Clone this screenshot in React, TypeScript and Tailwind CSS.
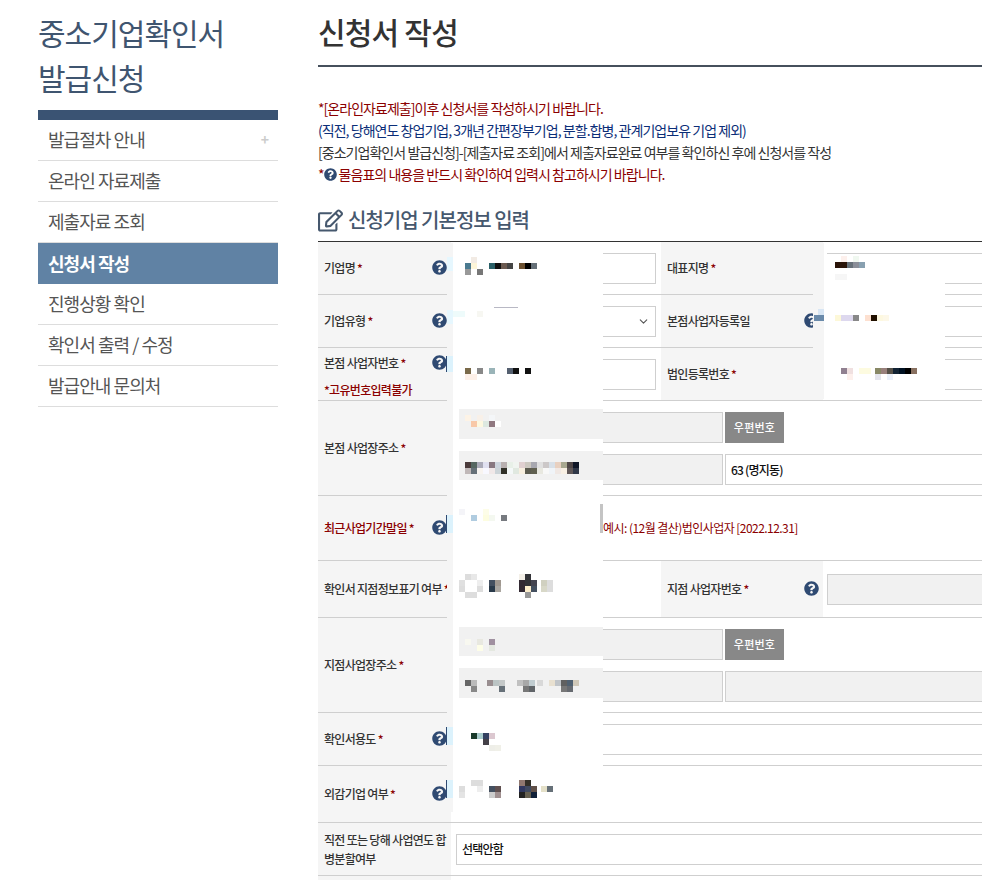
import { FaQuestionCircle, FaRegEdit } from "react-icons/fa";
import { ChevronDown } from "lucide-react";
import type { ReactNode } from "react";

const menu = ["발급절차 안내", "온라인 자료제출", "제출자료 조회", "신청서 작성", "진행상황 확인", "확인서 출력 / 수정", "발급안내 문의처"];

type Px = [number, string];
const pixels: [number, Px[]][] = [
  [257, [[471, "#f2ebe4"]]],
  [263, [[465, "#4a7a90"], [471, "#fdf5d8"], [489, "#2a6068"], [495, "#111111"], [501, "#6b5a50"], [507, "#444444"], [519, "#6b5030"], [525, "#000000"], [531, "#667078"]]],
  [269, [[465, "#999999"], [477, "#777777"]]],
  [311, [[453, "#eefbfb"], [459, "#eefbfb"], [477, "#f7f7f2"]]],
  [368, [[465, "#7a6a4a"], [477, "#888888"], [489, "#9ab4b8"], [507, "#556070"], [513, "#111111"], [525, "#111111"]]],
  [374, [[465, "#fdf0e8"], [471, "#fdf0e8"]]],
  [415, [[465, "#fdf3e6"], [477, "#f8f0e8"], [489, "#f4f6f8"]]],
  [421, [[471, "#f8c8a8"], [477, "#fdf8e0"], [483, "#dde8e0"], [489, "#907880"], [495, "#ffffff"]]],
  [462, [[465, "#4a3a3a"], [471, "#556660"], [477, "#aaaab8"], [483, "#e0e0f0"], [489, "#887880"], [495, "#ccd4dc"], [501, "#b8b0b0"], [507, "#e8f0e8"], [513, "#f0f4f0"], [519, "#e0d0d0"], [525, "#ccc8c0"], [531, "#a8a8b0"], [537, "#e0e0e0"], [543, "#ccc8c8"], [549, "#d8e0e8"], [555, "#e8d0c0"], [561, "#a8a890"], [567, "#504848"], [573, "#101828"]]],
  [468, [[465, "#c0b8b8"], [471, "#667078"], [477, "#f8f4f0"], [483, "#f8f8ff"], [489, "#f0e8e8"], [495, "#ccd4d8"], [501, "#303028"], [507, "#f4f8f8"], [513, "#e0e8e0"], [519, "#f8f0e0"], [525, "#5c5c50"], [531, "#606050"], [537, "#e8e8e0"], [543, "#f8f8f8"], [549, "#f0f4f8"], [555, "#f0e8e4"], [561, "#f8f0e4"], [567, "#605858"], [573, "#303848"]]],
  [515, [[471, "#b0cce0"], [483, "#fdfde0"], [489, "#f4f8f0"], [501, "#777a80"]]],
  [509, [[459, "#f4f4f8"], [483, "#fdfde8"]]],
  [574, [[465, "#dddddd"], [471, "#e8e8e8"], [519, "#f4f0e8"], [525, "#333338"]]],
  [580, [[459, "#e0e0e0"], [477, "#eeeeee"], [489, "#445060"], [495, "#a09890"], [519, "#332a33"], [525, "#333338"], [531, "#444450"], [541, "#d0d0c0"], [547, "#dddddd"]]],
  [586, [[459, "#dddddd"], [477, "#dddddd"], [489, "#2a3a4a"], [495, "#aaa6a0"], [519, "#332a33"], [525, "#fdeecc"], [531, "#445060"], [541, "#d8d8c8"], [547, "#dddddd"]]],
  [592, [[465, "#dddddd"], [471, "#dddddd"], [525, "#999999"]]],
  [639, [[465, "#f8f8f0"], [477, "#e8e8e0"], [489, "#a090a0"]]],
  [645, [[477, "#fdfde8"], [489, "#e4e8e0"]]],
  [680, [[465, "#666666"], [471, "#bbbbbb"], [487, "#998e90"], [493, "#bbc4c4"], [499, "#c4c8c8"], [517, "#c0c0c0"], [523, "#a8a8a8"], [529, "#c0ccd0"], [537, "#d8d8d8"], [549, "#e8e0d0"], [555, "#c0c4c8"], [561, "#606060"], [567, "#506070"], [573, "#d0c8b8"]]],
  [686, [[471, "#888888"], [499, "#667078"], [523, "#777777"], [529, "#606468"], [561, "#777777"], [567, "#666a70"]]],
  [733, [[471, "#1a3a2a"], [477, "#aacccc"], [483, "#334060"], [489, "#dcc8d0"]]],
  [739, [[483, "#444048"]]],
  [745, [[489, "#eeeee8"], [495, "#f0f0e8"]]],
  [780, [[471, "#dddddd"], [477, "#dddddd"], [519, "#907870"], [525, "#333028"]]],
  [786, [[459, "#dddddd"], [477, "#eeeeee"], [489, "#445060"], [495, "#605050"], [519, "#303860"], [525, "#404a60"], [531, "#605048"], [541, "#e4e0c8"], [547, "#667078"]]],
  [792, [[459, "#e4e4e4"], [489, "#cccccc"], [495, "#a09090"], [519, "#222222"], [525, "#666050"], [531, "#102038"]]],
  [262, [[835, "#2a1408"], [841, "#2a1408"], [847, "#667078"], [853, "#8a8e98"], [859, "#88a0b0"]]],
  [256, [[841, "#fdf0ec"], [853, "#f0f8f0"]]],
  [274, [[835, "#f6f6f6"], [841, "#f6f6f6"]]],
  [315, [[835, "#fdf8d8"], [841, "#ddd8ee"], [847, "#ddd8ee"], [853, "#888888"], [865, "#fde0d0"], [871, "#201000"], [877, "#fdf8e0"], [883, "#fdf8e8"]]],
  [368, [[841, "#908090"], [847, "#f0e0e0"], [859, "#fdfbe0"], [865, "#fdfbe0"], [875, "#888866"], [881, "#98807c"], [887, "#555048"], [893, "#112233"], [899, "#001122"], [905, "#000000"], [911, "#887060"]]],
  [374, [[847, "#fdf0ec"], [875, "#e4e4ec"], [887, "#eaf0fa"]]],
];

function Help({ className = "" }: { className?: string }) {
  return <FaQuestionCircle className={`shrink-0 text-[15px] text-[#2f4a72] ${className}`} />;
}

function Star() {
  return <span className="text-[#8b0000]"> *</span>;
}

function Th({ children, width, help, top }: { children: ReactNode; width: string; help?: boolean; top?: boolean }) {
  return (
    <div className={`${width} flex h-full shrink-0 justify-between bg-[#f5f5f5] pl-[6px] pr-[4px] ${top ? "items-start pt-[1px]" : "items-center pb-[2px]"}`}>
      <div className="min-w-0 text-[12px] font-medium leading-[27px] tracking-[-0.7px] whitespace-nowrap text-[#333]">{children}</div>
      {help && <Help className={top ? "mt-[6px]" : ""} />}
    </div>
  );
}

function Row({ h, children }: { h: string; children: ReactNode }) {
  return <div className={`${h} flex border-b border-[#cfcfcf]`}>{children}</div>;
}

function Field({ width, gray, children }: { width: string; gray?: boolean; children?: ReactNode }) {
  return (
    <div className={`${width} relative flex h-[31px] shrink-0 items-center border border-[#cfcfcf] px-[5px] text-[12px] font-medium tracking-[-0.8px] text-[#111] ${gray ? "bg-[#f1f1f1]" : "bg-white"}`}>
      {children}
    </div>
  );
}

function Zip() {
  return (
    <button className="ml-[2px] h-[31px] w-[59px] shrink-0 bg-[#888] text-[11px] font-medium tracking-[0.2px] text-white">우편번호</button>
  );
}

export default function App() {
  return (
    <div className="relative h-[880px] w-[982px] overflow-hidden bg-white font-['Noto_Sans_CJK_KR','Noto_Sans',sans-serif]">
      <div className="flex">
        <aside className="ml-[38px] w-[240px] shrink-0">
          <h2 className="pt-[10px] text-[30px] leading-[45px] tracking-[-1px] text-[#3f5570]">
            중소기업확인서
            <br />
            발급신청
          </h2>
          <div className="mt-[10px] h-[10px] bg-[#3a5373]" />
          <ul>
            {menu.map((m, i) => (
              <li
                key={m}
                className={`flex h-[41px] items-center justify-between px-[10px] pb-[1px] text-[18px] tracking-[-0.95px] ${
                  i === 3 ? "bg-[#6082a4] font-bold text-white" : "border-b border-[#dddddd] text-[#555]"
                }`}
              >
                {m}
                {i === 0 && <span className="text-[14px] font-bold text-[#cccccc]">+</span>}
              </li>
            ))}
          </ul>
        </aside>

        <main className="ml-[40px] w-[664px] shrink-0 overflow-hidden">
          <h1 className="h-[67px] border-b-2 border-[#46505c] pt-[8px] text-[30px] leading-[46px] font-medium tracking-[-0.8px] text-[#333]">신청서 작성</h1>
          <div className="mt-[30px] text-[14px] leading-[22px] tracking-[-0.96px]">
            <p className="text-[#8b0000]">*[온라인자료제출]이후 신청서를 작성하시기 바랍니다.</p>
            <p className="text-[#0b2e78]">(직전, 당해연도 창업기업, 3개년 간편장부기업, 분할.합병, 관계기업보유 기업 제외)</p>
            <p className="text-[#333]">[중소기업확인서 발급신청]-[제출자료 조회]에서 제출자료완료 여부를 확인하신 후에 신청서를 작성</p>
            <p className="flex items-center text-[#8b0000]">
              *<Help className="mr-[2px] !text-[13px]" />물음표의 내용을 반드시 확인하여 입력시 참고하시기 바랍니다.
            </p>
          </div>
          <div className="mt-[20px] flex h-[30px] items-center gap-[5px] text-[#46586e]">
            <FaRegEdit className="text-[25px]" />
            <span className="text-[20px] font-medium tracking-[-1px]">신청기업 기본정보 입력</span>
          </div>

          <div className="mt-[6px] border-t border-[#333]">
            <Row h="h-[53px]">
              <Th width="w-[133px]" help>기업명<Star /></Th>
              <div className="flex w-[210px] shrink-0 items-center pl-[8px]"><Field width="w-[197px]" /></div>
              <Th width="w-[162px]">대표지명<Star /></Th>
              <div className="flex min-w-0 flex-1 items-center pl-[4px]"><Field width="w-[200px]" /></div>
            </Row>
            <Row h="h-[53px]">
              <Th width="w-[133px]" help>기업유형<Star /></Th>
              <div className="flex w-[210px] shrink-0 items-center pl-[8px]">
                <Field width="w-[197px] justify-end"><ChevronDown className="size-[13px] text-[#555]" /></Field>
              </div>
              <Th width="w-[162px]" help>본점사업자등록일</Th>
              <div className="flex min-w-0 flex-1 items-center pl-[4px]"><Field width="w-[200px]" /></div>
            </Row>
            <Row h="h-[53px]">
              <Th width="w-[133px]" help top>
                본점 사업자번호<Star />
                <br />
                <span className="text-[#8b0000]">*고유번호입력불가</span>
              </Th>
              <div className="flex w-[210px] shrink-0 items-center pl-[8px]"><Field width="w-[197px]" /></div>
              <Th width="w-[162px]">법인등록번호<Star /></Th>
              <div className="flex min-w-0 flex-1 items-center pl-[4px]"><Field width="w-[200px]" /></div>
            </Row>
            <Row h="h-[95px]">
              <Th width="w-[133px]">본점 사업장주소<Star /></Th>
              <div className="flex flex-1 flex-col gap-[11px] pt-[11px] pl-[8px]">
                <div className="flex"><Field width="w-[264px]" gray /><Zip /></div>
                <div className="flex"><Field width="w-[264px]" gray /><Field width="w-[300px] ml-[2px]">63 (명지동)</Field></div>
              </div>
            </Row>
            <Row h="h-[65px]">
              <Th width="w-[133px]" help><span className="text-[#8b0000]">최근사업기간말일<Star /></span></Th>
              <div className="flex flex-1 items-center pl-[8px]">
                <Field width="w-[144px]" />
                <span className="text-[12px] tracking-[-0.55px] text-[#8b0000]">예시: (12월 결산)법인사업자 [2022.12.31]</span>
              </div>
            </Row>
            <Row h="h-[57px]">
              <Th width="w-[133px]">확인서 지점정보표기 여부<Star /></Th>
              <div className="w-[210px] shrink-0" />
              <Th width="w-[162px]" help>지점 사업자번호<Star /></Th>
              <div className="flex min-w-0 flex-1 items-center pl-[4px]"><Field width="w-[200px]" gray /></div>
            </Row>
            <Row h="h-[95px]">
              <Th width="w-[133px]">지점사업장주소<Star /></Th>
              <div className="flex flex-1 flex-col gap-[11px] pt-[11px] pl-[8px]">
                <div className="flex"><Field width="w-[264px]" gray /><Zip /></div>
                <div className="flex"><Field width="w-[264px]" gray /><Field width="w-[300px] ml-[2px]" gray /></div>
              </div>
            </Row>
            <Row h="h-[53px]">
              <Th width="w-[133px]" help>확인서용도<Star /></Th>
              <div className="flex flex-1 items-center pl-[8px]"><Field width="w-[560px]" /></div>
            </Row>
            <Row h="h-[57px]">
              <Th width="w-[133px]" help>외감기업 여부<Star /></Th>
              <div className="flex-1" />
            </Row>
            <Row h="h-[53px]">
              <div className="flex h-full w-[133px] shrink-0 items-center bg-[#f5f5f5] pr-[4px] pl-[6px] text-[12px] leading-[19px] font-medium tracking-[-0.7px] break-all text-[#333]">
                <span>직전 또는 당해 사업연도 합병분할여부</span>
              </div>
              <div className="flex flex-1 items-center pl-[5px]"><Field width="w-[560px]">선택안함</Field></div>
            </Row>
            <div className="h-[20px] w-[133px] bg-[#f5f5f5]" />
          </div>
        </main>
      </div>

      {/* mosaic that hides the applicant's data in the picture */}
      <svg className="pointer-events-none absolute top-0 left-0" width="982" height="880" viewBox="0 0 982 880" aria-hidden="true">
        <rect x="447" y="243" width="6" height="569" fill="#f5f5f5" />
        <rect x="453" y="243" width="150" height="569" fill="#ffffff" />
        <rect x="813" y="243" width="11" height="156" fill="#f5f5f5" />
        <rect x="824" y="254" width="121" height="145" fill="#ffffff" />
        <rect x="459" y="409" width="144" height="30" fill="#f1f1f1" />
        <rect x="459" y="451" width="144" height="29" fill="#f1f1f1" />
        <rect x="459" y="627" width="144" height="29" fill="#f1f1f1" />
        <rect x="459" y="668" width="144" height="30" fill="#f1f1f1" />
        <rect x="494" y="307" width="24" height="1" fill="#b8b8c4" />
        <rect x="600" y="504" width="3" height="29" fill="#c4c4c4" />
        <rect x="814" y="315" width="10" height="6" fill="#6a8aaa" />
        <rect x="818" y="309" width="6" height="6" fill="#d8e6f4" />
        <rect x="447" y="257" width="6" height="14" fill="#e6f7fe" />
        <rect x="447" y="310" width="6" height="14" fill="#e6f7fe" />
        {[[356, 16], [515, 18], [727, 18], [780, 18]].map(([y, h]) => (
          <g key={y}>
            <rect x="446" y={y} width="1" height={h} fill="#2f4a72" />
            <rect x="447" y={y} width="6" height={h} fill="#dcf2fc" />
          </g>
        ))}
        {pixels.flatMap(([y, row]) =>
          row.map(([x, c]) => <rect key={`${x}-${y}`} x={x} y={y} width="6" height="6" fill={c} />),
        )}
      </svg>
    </div>
  );
}
